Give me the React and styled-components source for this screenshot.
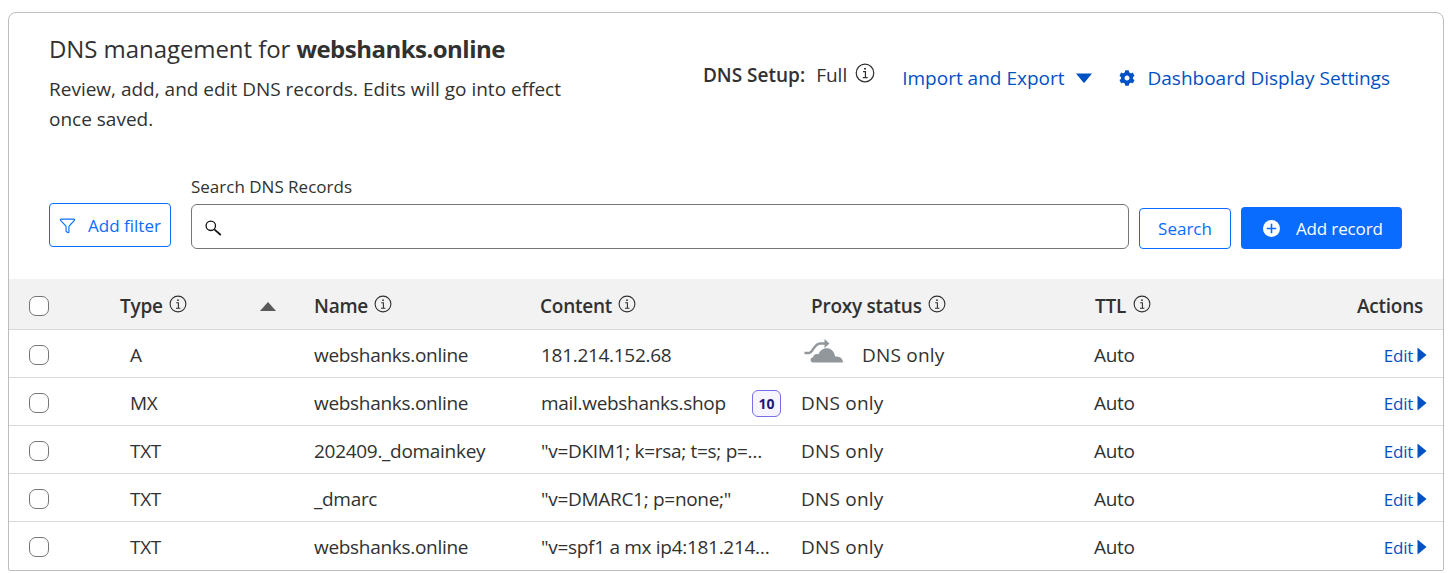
import React from 'react'
import styled, { createGlobalStyle } from 'styled-components'
import { Filter } from 'lucide-react'
import { FaCog } from 'react-icons/fa'

const GlobalStyle = createGlobalStyle`
  html, body {
    margin: 0;
    background: #fff;
    color: #313131;
    font-family: 'Open Sans', 'Noto Sans', sans-serif;
    overflow: hidden;
  }
`

const Page = styled.div`
  box-sizing: border-box;
  width: 1453px;
  height: 573px;
  padding: 12px 9px 0 8px;
`

const Card = styled.section`
  box-sizing: border-box;
  width: 1436px;
  height: 559px;
  border: 1px solid #bdbdbd;
  border-radius: 8px 8px 2px 2px;
  overflow: hidden;
`

const Header = styled.header`
  display: flex;
  justify-content: space-between;
  height: 140px;
  padding: 20px 53px 0 40px;
`

const Intro = styled.div`
  width: 530px;
`

const Title = styled.h1`
  margin: 0;
  font-size: 24px;
  line-height: 32px;
  font-weight: 400;
  letter-spacing: -0.07px;
  white-space: nowrap;

  b {
    font-weight: 700;
    letter-spacing: -0.52px;
  }
`

const Lead = styled.p`
  margin: 9px 0 0;
  font-size: 19px;
  line-height: 30px;
`

const HeaderLinks = styled.div`
  display: flex;
  align-items: flex-start;
  padding-top: 30px;
`

const Setup = styled.div`
  display: flex;
  align-items: center;
  gap: 8px;
  margin-right: 27px;
  font-size: 19px;
  line-height: 28px;
  transform: translateY(-2px);

  b {
    margin-right: 3px;
    font-weight: 600;
  }
`

const TextLink = styled.a`
  display: flex;
  align-items: center;
  color: #0051c3;
  font-size: 19px;
  line-height: 30px;
  margin-left: ${(p) => p.$gap || 0}px;
`

const Toolbar = styled.div`
  display: flex;
  align-items: flex-end;
  height: 106px;
  padding: 0 40px 30px 40px;
  box-sizing: border-box;
`

const OutlineButton = styled.button`
  box-sizing: border-box;
  display: flex;
  align-items: center;
  justify-content: center;
  gap: 12px;
  width: ${(p) => p.$width}px;
  height: ${(p) => p.$height}px;
  margin-bottom: ${(p) => p.$lift || 0}px;
  padding: 0;
  background: #fff;
  border: 1px solid #0a6cff;
  border-radius: 4px;
  color: #0a6cff;
  font: 400 17px 'Open Sans', sans-serif;
`

const SearchField = styled.label`
  display: flex;
  flex-direction: column;
  gap: 6px;
  width: 938px;
  margin: 0 10px 0 20px;
  font-size: 17px;
  line-height: 22px;
`

const SearchBox = styled.div`
  box-sizing: border-box;
  display: flex;
  align-items: center;
  height: 45px;
  padding: 3px 0 0 13px;
  border: 1px solid #757575;
  border-radius: 6px;
  color: #111;
`

const PrimaryButton = styled.button`
  box-sizing: border-box;
  display: flex;
  align-items: center;
  gap: 16px;
  width: 161px;
  height: 42px;
  margin-left: 10px;
  padding: 0 0 0 22px;
  background: #0a6cff;
  border: 0;
  border-radius: 4px;
  color: #fff;
  font: 400 17px 'Open Sans', sans-serif;
  letter-spacing: -0.15px;
`

const Grid = styled.div`
  box-sizing: border-box;
  display: grid;
  grid-template-columns: 111px 194px 226px 261px 293px 1fr;
  align-items: center;
  border-bottom: 1px solid #d9d9d9;
`

const HeadRow = styled(Grid)`
  height: 51px;
  padding-top: 4px;
  background: #f2f2f2;
  font-size: 19px;
  font-weight: 600;
  letter-spacing: -0.25px;
`

const Row = styled(Grid)`
  height: 48px;
  padding-top: 3px;
  font-size: 19px;
  letter-spacing: -0.3px;

  &:last-child {
    border-bottom-color: transparent;
  }
`

const CheckCell = styled.div`
  display: flex;
  padding-left: 20px;
`

const Check = styled.span`
  box-sizing: border-box;
  width: 20px;
  height: 20px;
  background: #fff;
  border: 1px solid #757575;
  border-radius: 7px;
`

const Cell = styled.div`
  display: flex;
  align-items: center;
  min-width: 0;
  padding-left: ${(p) => p.$indent || 0}px;
  padding-right: ${(p) => p.$trail || 0}px;
  justify-content: ${(p) => p.$justify || 'flex-start'};
  gap: ${(p) => p.$gap || 0}px;
`

const Clip = styled.span`
  max-width: 232px;
  overflow: hidden;
  white-space: nowrap;
  text-overflow: ellipsis;
`

const Status = styled.span`
  letter-spacing: 0.2px;
`

const SortArrow = styled.span`
  width: 0;
  height: 0;
  margin-left: auto;
  margin-right: 38px;
  border-left: 8.5px solid transparent;
  border-right: 8.5px solid transparent;
  border-bottom: 9px solid #595959;
`

const Badge = styled.span`
  box-sizing: border-box;
  display: flex;
  align-items: center;
  justify-content: center;
  flex: none;
  width: 29px;
  height: 27px;
  background: #f6f4ff;
  border: 1px solid #7a6ee8;
  border-radius: 6px;
  color: #1d1678;
  font-size: 14px;
  font-weight: 700;
  letter-spacing: 0;
`

const EditLink = styled.a`
  display: flex;
  align-items: center;
  gap: 4px;
  margin-left: auto;
  margin-right: 16px;
  color: #0051c3;
  font-size: 17px;
  letter-spacing: -0.25px;
`

const Info = ({ size = 18 }) => (
  <svg width={size} height={size} viewBox="0 0 18 18" fill="none" stroke="currentColor" style={{ flex: 'none', marginTop: -4 }}>
    <circle cx="9" cy="9" r="7.9" strokeWidth="1.1" />
    <circle cx="9" cy="5.2" r="0.9" fill="currentColor" stroke="none" />
    <path d="M7.2 7.8H9.4V13M7 13.2H11.4" strokeWidth="1.1" />
  </svg>
)

const Caret = () => (
  <svg width="16" height="10" viewBox="0 0 16 10" style={{ marginLeft: 12 }}>
    <path d="M0 0.5H16L8.8 9.3a1 1 0 0 1-1.6 0Z" fill="#0051c3" />
  </svg>
)

const Magnifier = () => (
  <svg width="17" height="16" viewBox="0 0 17 16" fill="none" stroke="#111">
    <circle cx="5.800" cy="5.800" r="4.700" strokeWidth="1.300" />
    <path d="M9.300 9.300L15.800 15" strokeWidth="1.700" />
  </svg>
)

const PlusCircle = () => (
  <svg width="17" height="17" viewBox="0 0 17 17">
    <circle cx="8.5" cy="8.5" r="8.5" fill="#fff" />
    <path d="M8.5 3.8V13.2M3.8 8.5H13.2" stroke="#0a6cff" strokeWidth="1.6" />
  </svg>
)

const EditArrow = () => (
  <svg width="10" height="16" viewBox="0 0 10 16">
    <path d="M0.5 0.5L9.5 8L0.5 15.5Z" fill="#0051c3" />
  </svg>
)

const Cloud = () => (
  <svg width="40" height="25" viewBox="0 0 40 25" style={{ flex: 'none', marginTop: -9 }}>
    <path
      fill="#92979b"
      d="M8.500 24.500a2.700 2.700 0 0 1 .5-5.300c.5-2.500 3-3.800 5.500-3c1.500-4 5-6.500 9-6 4.500.5 7 4 7.500 8.300 4-.5 8 1.500 8 6Z"
    />
    <path fill="none" stroke="#fff" strokeWidth="5" d="M0.500 15H5C9 15 10 5.500 16 5.500H21" />
    <path fill="none" stroke="#92979b" strokeWidth="2.400" d="M0.500 15H5C9 15 10 5.500 16 5.500H21" />
    <path fill="#92979b" d="M20.500 1L25.500 5.500L20.500 10Z" />
  </svg>
)

const records = [
  { type: 'A', name: 'webshanks.online', content: '181.214.152.68', proxied: true },
  { type: 'MX', name: 'webshanks.online', content: 'mail.webshanks.shop', priority: 10 },
  { type: 'TXT', name: '202409._domainkey', content: '"v=DKIM1; k=rsa; t=s; p=MIIBIjANBgkqh' },
  { type: 'TXT', name: '_dmarc', content: '"v=DMARC1; p=none;"' },
  { type: 'TXT', name: 'webshanks.online', content: '"v=spf1 a mx ip4:181.214.152.68 ~all"' }
]

const App = () => {
  return (
    <Page>
      <GlobalStyle />
      <Card>
        <Header>
          <Intro>
            <Title>
              DNS management for <b>webshanks.online</b>
            </Title>
            <Lead>Review, add, and edit DNS records. Edits will go into effect once saved.</Lead>
          </Intro>
          <HeaderLinks>
            <Setup>
              <b>DNS Setup:</b> Full <Info size={20} />
            </Setup>
            <TextLink>
              Import and Export <Caret />
            </TextLink>
            <TextLink $gap={27}>
              <FaCog size={16} style={{ marginRight: 12 }} />
              Dashboard Display Settings
            </TextLink>
          </HeaderLinks>
        </Header>
        <Toolbar>
          <OutlineButton $width={122} $height={44} $lift={2}>
            <Filter size={17} strokeWidth={1.6} />
            Add filter
          </OutlineButton>
          <SearchField>
            Search DNS Records
            <SearchBox>
              <Magnifier />
            </SearchBox>
          </SearchField>
          <OutlineButton $width={92} $height={41}>
            Search
          </OutlineButton>
          <PrimaryButton>
            <PlusCircle />
            Add record
          </PrimaryButton>
        </Toolbar>
        <HeadRow>
          <CheckCell>
            <Check />
          </CheckCell>
          <Cell $gap={6}>
            Type <Info />
            <SortArrow />
          </Cell>
          <Cell $gap={6}>
            Name <Info />
          </Cell>
          <Cell $gap={6}>
            Content <Info />
          </Cell>
          <Cell $gap={6} $indent={10}>
            Proxy status <Info />
          </Cell>
          <Cell $justify="space-between" $trail={20}>
            <Cell $gap={7} $indent={1}>
              TTL <Info />
            </Cell>
            Actions
          </Cell>
        </HeadRow>
        {records.map((r, i) => (
          <Row key={i}>
            <CheckCell>
              <Check />
            </CheckCell>
            <Cell $indent={10}>{r.type}</Cell>
            <Cell>{r.name}</Cell>
            <Cell $indent={1} $trail={20} $justify="space-between" $gap={10}>
              <Clip>{r.content}</Clip>
              {r.priority && <Badge>{r.priority}</Badge>}
            </Cell>
            {r.proxied ? (
              <Cell $indent={3} $gap={18}>
                <Cloud />
                <Status>DNS only</Status>
              </Cell>
            ) : (
              <Cell>
                <Status>DNS only</Status>
              </Cell>
            )}
            <Cell>
              Auto
              <EditLink>
                Edit <EditArrow />
              </EditLink>
            </Cell>
          </Row>
        ))}
      </Card>
    </Page>
  )
}

export default App
